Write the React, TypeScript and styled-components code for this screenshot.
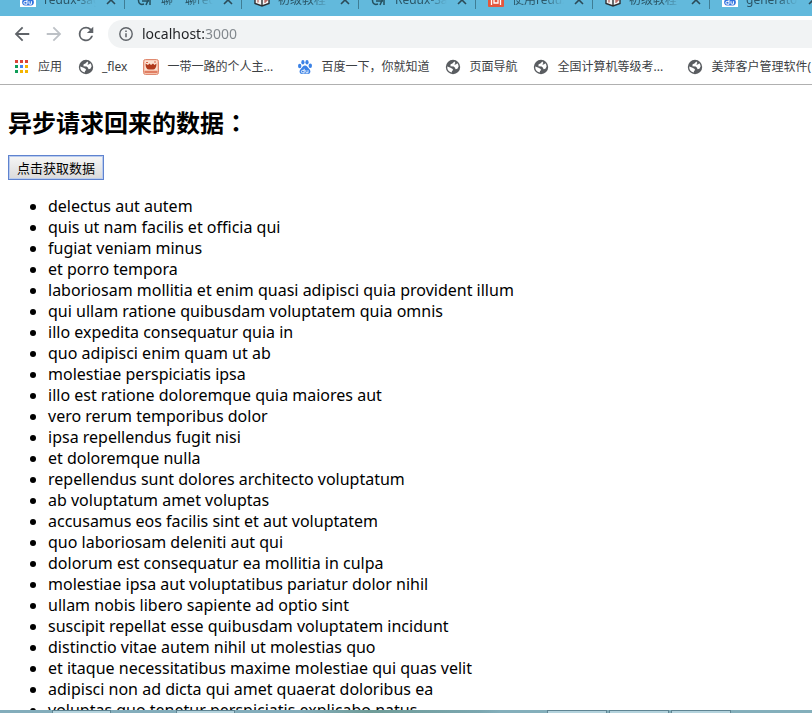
import React from "react";
import styled, { createGlobalStyle } from "styled-components";

const UI = `"Noto Sans", "Noto Sans CJK SC", sans-serif`;

const Global = createGlobalStyle`
  * { box-sizing: border-box; }
  body { margin: 0; background: #fff; overflow: hidden; }
`;

const Window = styled.div`
  display: flex;
  flex-direction: column;
  height: 100vh;
  overflow: hidden;
  font-family: ${UI};
  color: #000;
`;

const TabStrip = styled.nav`
  display: flex;
  align-items: flex-end;
  flex: none;
  height: 16px;
  padding-left: 8px;
  overflow: hidden;
  background: #62b9dc;
`;

const Tab = styled.div`
  display: flex;
  align-items: center;
  flex: none;
  width: 117px;
  height: 32px;
  padding-left: 12px;
`;

const TabTitle = styled.a`
  flex: 1;
  margin: 0 8px;
  overflow: hidden;
  white-space: nowrap;
  text-decoration: none;
  font-size: 12px;
  line-height: 16px;
  color: #2b5566;
  mask-image: linear-gradient(to right, #000 60%, transparent);
`;

const TabClose = styled.button`
  display: flex;
  flex: none;
  padding: 0;
  border: 0;
  background: none;
  color: #2b4a57;
`;

const TabDivider = styled.span`
  flex: none;
  width: 1px;
  height: 18px;
  margin-left: 6px;
  background: #3f7d95;
`;

const Toolbar = styled.header`
  display: flex;
  align-items: center;
  flex: none;
  height: 36px;
  padding-left: 12px;
  gap: 12px;
`;

const ToolButton = styled.button<{ $dim?: boolean }>`
  display: flex;
  flex: none;
  padding: 0;
  border: 0;
  background: none;
  color: ${(p) => (p.$dim ? "#bdc1c6" : "#5f6368")};
`;

const AddressBar = styled.div`
  display: flex;
  align-items: center;
  flex: 1;
  height: 28px;
  padding-left: 10px;
  gap: 8px;
  border-radius: 14px 0 0 14px;
  background: #f1f3f4;
  color: #5f6368;
`;

const Address = styled.input`
  flex: 1;
  min-width: 0;
  height: 20px;
  padding: 0;
  border: 0;
  outline: 0;
  font-family: ${UI};
  font-size: 14px;
  line-height: 20px;
  color: transparent;
  caret-color: #202124;
  background: linear-gradient(to right, #202124 62px, #80868b 62px);
  background-clip: text;
`;

const Bookmarks = styled.nav`
  display: flex;
  align-items: center;
  flex: none;
  height: 33px;
  padding: 0 0 3px 14px;
  gap: 16px;
  overflow: hidden;
  border-bottom: 1px solid #b0b0b0;
`;

const Bookmark = styled.a`
  display: flex;
  align-items: center;
  flex: none;
  gap: 8px;
  color: #3c4043;
  text-decoration: none;
`;

const BookmarkLabel = styled.span<{ $long?: boolean }>`
  width: ${(p) => (p.$long ? "114px" : "auto")};
  font-size: 12px;
  line-height: 16px;
  white-space: nowrap;
`;

const Page = styled.main`
  flex: 1;
  min-height: 0;
  padding: 0 8px;
  overflow: hidden;
`;

const Title = styled.h2`
  margin: 20px 0 16px;
  font-size: 24px;
  line-height: 33px;
  font-weight: 700;
`;

const Colon = styled.span`
  font-family: "Noto Sans CJK TC", sans-serif;
`;

const FetchButton = styled.button`
  display: block;
  height: 25px;
  padding: 0 8px;
  border: 1px solid #5f83cf;
  outline: 1px solid #b9cbee;
  outline-offset: -2px;
  background: linear-gradient(#f6f6f6, #dadada);
  font-family: ${UI};
  font-size: 13px;
  line-height: 20px;
  color: #000;
`;

const List = styled.ul`
  margin: 16px 0;
  padding-left: 40px;
  font-size: 16px;
  line-height: 21px;
`;

const Taskbar = styled.footer`
  display: grid;
  grid-template-columns: 52px 59px 65px 59px 312px 60px 2px 60px 2px 60px;
  flex: none;
  height: 3px;
  background: linear-gradient(to right, #83adbb 300px, #6f9c98 370px, #7ba7b0 480px, #84afbb 500px);
`;

const TaskButton = styled.span<{ $col: number }>`
  grid-column: ${(p) => p.$col};
  grid-row: 1;
  border: 1px solid #5f8593;
  border-bottom: 0;
  background: #b4d3dd;
`;

const BackIcon = () => (
  <svg width="20" height="20" viewBox="1 1 22 22" fill="currentColor">
    <path d="M20 11H7.83l5.59-5.59L12 4l-8 8 8 8 1.41-1.41L7.83 13H20z" />
  </svg>
);

const ForwardIcon = () => (
  <svg width="20" height="20" viewBox="1 1 22 22" fill="currentColor">
    <path d="M4 11h12.17l-5.59-5.59L12 4l8 8-8 8-1.41-1.41L16.17 13H4z" />
  </svg>
);

const ReloadIcon = () => (
  <svg width="20" height="20" viewBox="1 1 22 22" fill="currentColor">
    <path d="M17.65 6.35A7.96 7.96 0 0 0 12 4a8 8 0 1 0 7.73 10h-2.08A6 6 0 1 1 12 6c1.66 0 3.14.69 4.22 1.78L13 11h7V4z" />
  </svg>
);

const InfoIcon = () => (
  <svg width="16" height="16" viewBox="0 0 16 16" fill="none" stroke="currentColor">
    <circle cx="8" cy="8" r="6.2" strokeWidth="1.4" />
    <path d="M8 7.2v4M8 4.6v1.4" strokeWidth="1.5" />
  </svg>
);

const CloseIcon = () => (
  <svg width="14" height="14" viewBox="0 0 14 14" stroke="currentColor" strokeWidth="1.6">
    <path d="M3 3l8 8M11 3l-8 8" />
  </svg>
);

const AppsIcon = () => {
  const colors = ["#db4437", "#db4437", "#db4437", "#0f9d58", "#4285f4", "#f4b400", "#0f9d58", "#f4b400", "#f4b400"];
  return (
    <svg width="16" height="16" viewBox="0 0 16 16">
      {colors.map((c, i) => (
        <rect key={i} x={1 + (i % 3) * 5} y={1 + Math.floor(i / 3) * 5} width="3" height="3" fill={c} />
      ))}
    </svg>
  );
};

const GlobeIcon = () => (
  <svg width="16" height="16" viewBox="0 0 16 16">
    <circle cx="8" cy="8" r="7.2" fill="#5a5d61" />
    <path d="M9.4 2.6 7.4 4.4 5.6 5.2 5.4 7.2 8.6 7.4 9.8 8.6 10.6 10.2 12.4 9.8 13.6 7.6A6 6 0 0 0 12.4 4.2L10.8 5.6 9.2 5.4 10.4 4z" fill="#fff" />
    <path d="M2.2 7.6 5 8.4 7.4 9.8 8.2 11 7 12 6.8 13.6A6 6 0 0 1 2.2 7.6z" fill="#fff" />
  </svg>
);

const CupIcon = () => (
  <svg width="16" height="16" viewBox="0 0 16 16">
    <rect x="0.5" y="0.5" width="15" height="15" rx="2" fill="#f6c3ae" stroke="#e08a70" />
    <rect x="2" y="1.5" width="12" height="9.5" fill="#fbe0d0" />
    <path d="M2.5 4.5 5 6l1.5-1.5L8 6l2-1.5L11.500 6l2-1.500c0 4-1.500 6-3.500 6H6c-2.200 0-3.500-2-3.500-6z" fill="#b03a1c" />
    <path d="M3 3.500h2M11 3h2" stroke="#d9674a" />
    <path d="M1.500 13h13" stroke="#d9674a" strokeWidth="1.5" />
  </svg>
);

const PawIcon = () => (
  <svg width="16" height="16" viewBox="0 0 16 16">
    <g fill="#3b82e6">
      <ellipse cx="2.7" cy="7" rx="1.7" ry="2.2" />
      <ellipse cx="5.9" cy="3.3" rx="1.6" ry="2.3" />
      <ellipse cx="10" cy="3.3" rx="1.6" ry="2.3" />
      <ellipse cx="13.3" cy="6.8" rx="1.7" ry="2.2" />
      <path d="M8 6.6c2 0 2.4 1.8 4 3.2 2.4 2 1.6 5.4-1.2 5.2-1.8-.2-3.8-.2-5.6 0-2.8.2-3.6-3.2-1.2-5.2C5.600 8.400 6 6.600 8 6.600z" />
    </g>
    <path d="M7.2 9.8v4H5.6a1.2 1.2 0 0 1 0-2.4h1.6M8.8 11.2v1.6q0 1 1 1H11v-2.6" fill="none" stroke="#fff" strokeWidth="0.9" />
  </svg>
);

const BaiduTile = () => (
  <svg width="16" height="16" viewBox="0 0 16 16">
    <rect width="16" height="15" fill="#fff" />
    <path d="M8 3c2 0 2.4 2 4.2 3.6 2.8 2.6 2 7.2-1.4 7-1.8-.2-3.8-.2-5.6 0-3.4.2-4.2-4.4-1.4-7C5.6 5 6 3 8 3z" fill="#3474e0" />
    <path d="M7 7.6v4.6H5.2a1.3 1.3 0 0 1 0-2.8H7M9 9.2v2q0 1 1 1h1.4v-3" fill="none" stroke="#fff" />
  </svg>
);

const MarkIcon = () => (
  <svg width="16" height="16" viewBox="0 0 16 16" fill="none" stroke="#24505f" strokeWidth="1.5">
    <path d="M7.5 4.5C4 2.5 1.5 5 1.5 8.500S4 13 7 12M5 9h7M9 13l4-9v9" />
  </svg>
);

const BookIcon = () => (
  <svg width="16" height="16" viewBox="0 0 16 16">
    <path d="M1 3l7 2 7-2v8.500l-7 2.500-7-2.500z" fill="#f4f4f4" stroke="#2c2f33" strokeWidth="1.4" />
    <path d="M8 5v9" stroke="#2c2f33" strokeWidth="1.4" />
    <path d="M4 6.500v4M11 11V7h2v2h-2" stroke="#a8403a" fill="none" />
  </svg>
);

const RedIcon = () => (
  <svg width="16" height="16" viewBox="0 0 16 16">
    <rect width="16" height="15" rx="1" fill="#e4573d" />
    <path d="M3.500 13V3.500h9V13M6 7h4v4H6z" fill="none" stroke="#fff" strokeWidth="1.3" />
  </svg>
);

const tabs = [
  { icon: <BaiduTile />, title: "redux-saga" },
  { icon: <MarkIcon />, title: "聊一聊redux" },
  { icon: <BookIcon />, title: "初级教程" },
  { icon: <MarkIcon />, title: "Redux-Saga" },
  { icon: <RedIcon />, title: "使用redux" },
  { icon: <BookIcon />, title: "初级教程" },
  { icon: <BaiduTile />, title: "generator" },
];

const bookmarks = [
  { icon: <AppsIcon />, label: "应用" },
  { icon: <GlobeIcon />, label: "_flex" },
  { icon: <CupIcon />, label: "一带一路的个人主...", long: true },
  { icon: <PawIcon />, label: "百度一下，你就知道" },
  { icon: <GlobeIcon />, label: "页面导航" },
  { icon: <GlobeIcon />, label: "全国计算机等级考...", long: true },
  { icon: <GlobeIcon />, label: "美萍客户管理软件(" },
];

const items = [
  "delectus aut autem",
  "quis ut nam facilis et officia qui",
  "fugiat veniam minus",
  "et porro tempora",
  "laboriosam mollitia et enim quasi adipisci quia provident illum",
  "qui ullam ratione quibusdam voluptatem quia omnis",
  "illo expedita consequatur quia in",
  "quo adipisci enim quam ut ab",
  "molestiae perspiciatis ipsa",
  "illo est ratione doloremque quia maiores aut",
  "vero rerum temporibus dolor",
  "ipsa repellendus fugit nisi",
  "et doloremque nulla",
  "repellendus sunt dolores architecto voluptatum",
  "ab voluptatum amet voluptas",
  "accusamus eos facilis sint et aut voluptatem",
  "quo laboriosam deleniti aut qui",
  "dolorum est consequatur ea mollitia in culpa",
  "molestiae ipsa aut voluptatibus pariatur dolor nihil",
  "ullam nobis libero sapiente ad optio sint",
  "suscipit repellat esse quibusdam voluptatem incidunt",
  "distinctio vitae autem nihil ut molestias quo",
  "et itaque necessitatibus maxime molestiae qui quas velit",
  "adipisci non ad dicta qui amet quaerat doloribus ea",
  "voluptas quo tenetur perspiciatis explicabo natus",
];

export default function App() {
  return (
    <Window>
      <Global />
      <TabStrip aria-label="Tabs">
        {tabs.map((tab, i) => (
          <Tab key={i}>
            {tab.icon}
            <TabTitle href="#">{tab.title}</TabTitle>
            <TabClose aria-label="Close tab"><CloseIcon /></TabClose>
            <TabDivider />
          </Tab>
        ))}
      </TabStrip>
      <Toolbar>
        <ToolButton aria-label="Back"><BackIcon /></ToolButton>
        <ToolButton aria-label="Forward" $dim><ForwardIcon /></ToolButton>
        <ToolButton aria-label="Reload"><ReloadIcon /></ToolButton>
        <AddressBar>
          <InfoIcon />
          <Address aria-label="Address" defaultValue="localhost:3000" spellCheck={false} />
        </AddressBar>
      </Toolbar>
      <Bookmarks aria-label="Bookmarks">
        {bookmarks.map((b) => (
          <Bookmark key={b.label} href="#">
            {b.icon}
            <BookmarkLabel $long={b.long}>{b.label}</BookmarkLabel>
          </Bookmark>
        ))}
      </Bookmarks>
      <Page>
        <Title>异步请求回来的数据<Colon>：</Colon></Title>
        <FetchButton>点击获取数据</FetchButton>
        <List>
          {items.map((text) => <li key={text}>{text}</li>)}
        </List>
      </Page>
      <Taskbar>
        {[2, 4, 6, 8, 10].map((col) => <TaskButton key={col} $col={col} />)}
      </Taskbar>
    </Window>
  );
}
